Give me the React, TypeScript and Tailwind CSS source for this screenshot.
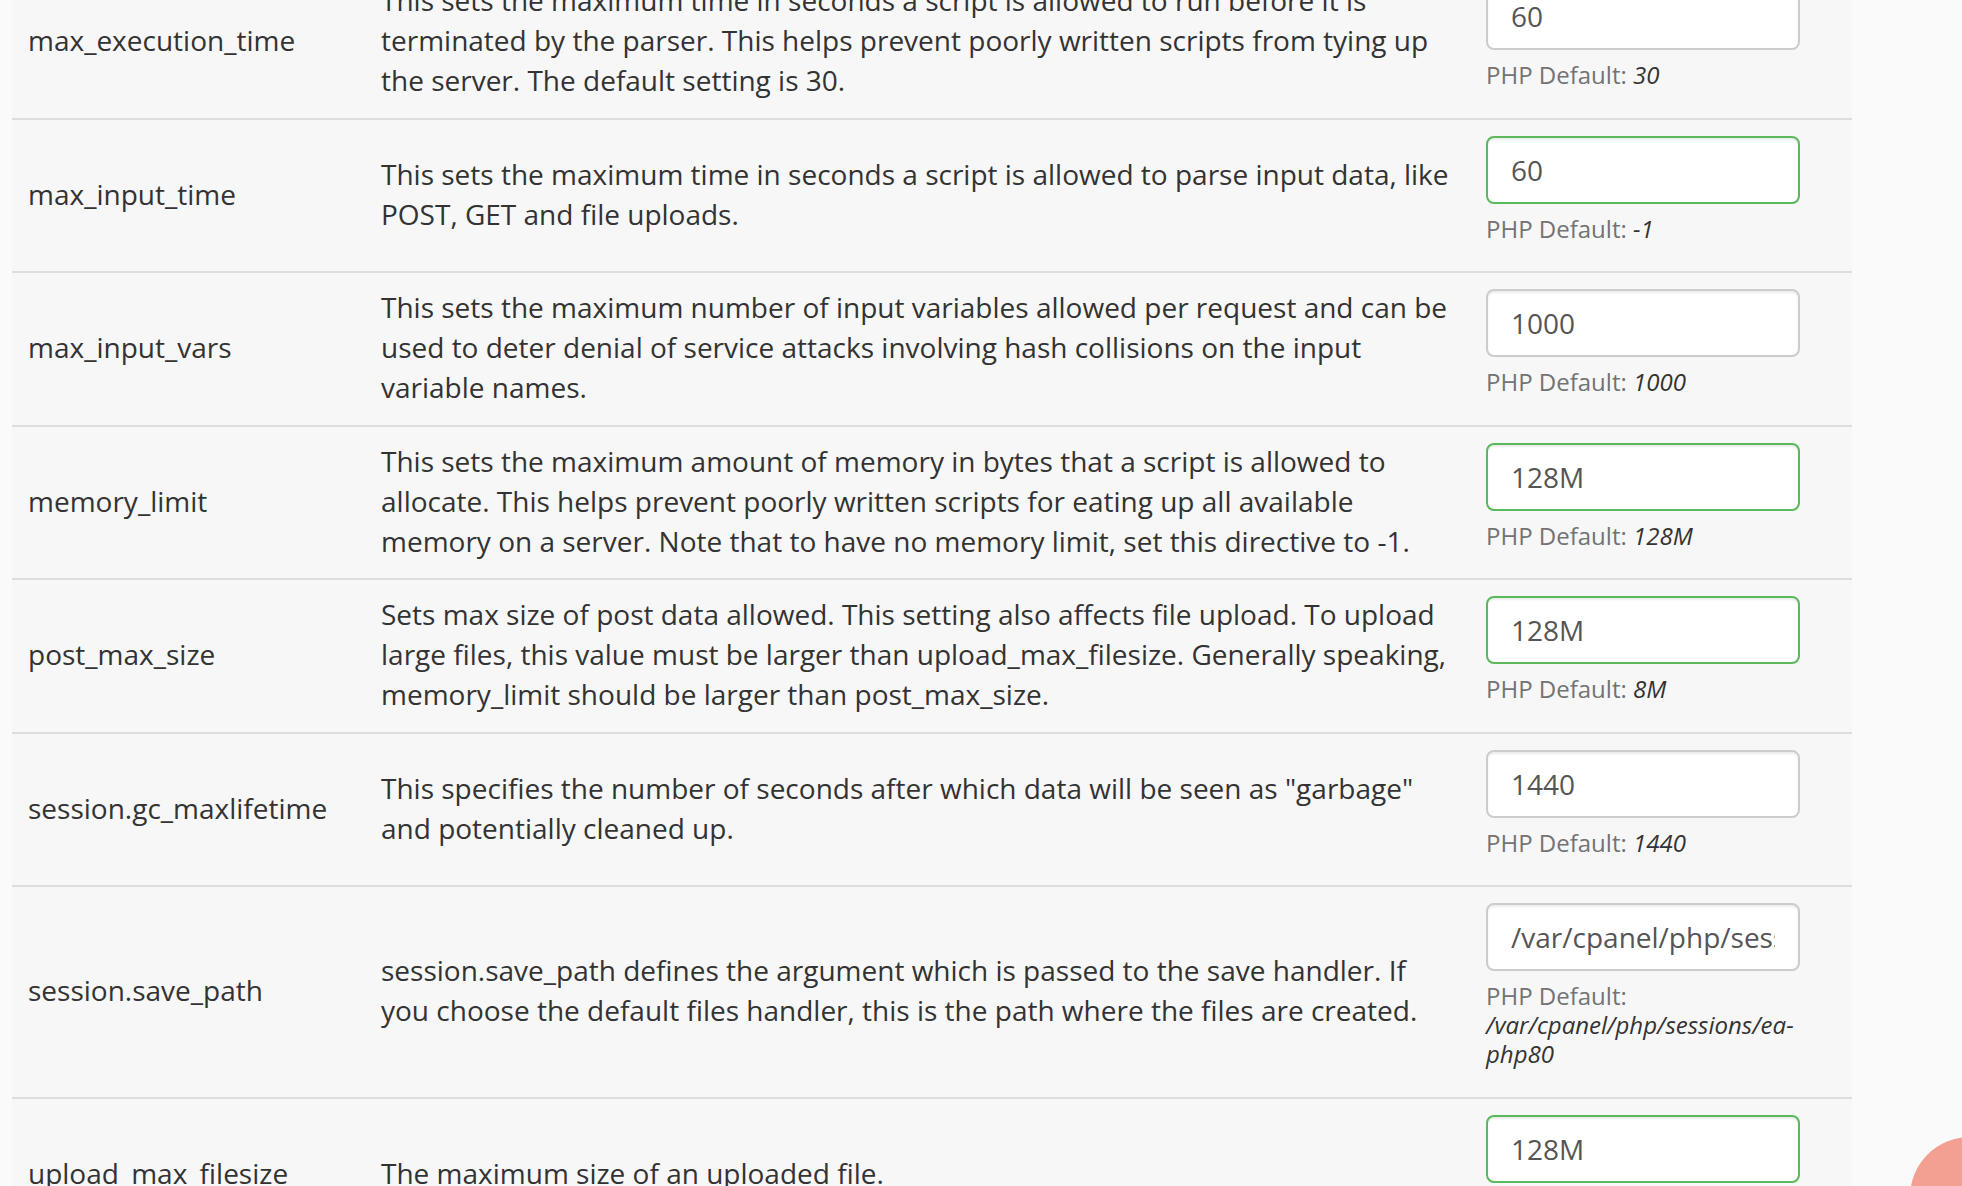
import React from 'react';

type Directive = {
  name: string;
  description: string;
  value: string;
  phpDefault: string;
  changed: boolean;
};

const directives: Directive[] = [
  {
    name: 'max_execution_time',
    description:
      'This sets the maximum time in seconds a script is allowed to run before it is terminated by the parser. This helps prevent poorly written scripts from tying up the server. The default setting is 30.',
    value: '60',
    phpDefault: '30',
    changed: false,
  },
  {
    name: 'max_input_time',
    description:
      'This sets the maximum time in seconds a script is allowed to parse input data, like POST, GET and file uploads.',
    value: '60',
    phpDefault: '-1',
    changed: true,
  },
  {
    name: 'max_input_vars',
    description:
      'This sets the maximum number of input variables allowed per request and can be used to deter denial of service attacks involving hash collisions on the input variable names.',
    value: '1000',
    phpDefault: '1000',
    changed: false,
  },
  {
    name: 'memory_limit',
    description:
      'This sets the maximum amount of memory in bytes that a script is allowed to allocate. This helps prevent poorly written scripts for eating up all available memory on a server. Note that to have no memory limit, set this directive to -1.',
    value: '128M',
    phpDefault: '128M',
    changed: true,
  },
  {
    name: 'post_max_size',
    description:
      'Sets max size of post data allowed. This setting also affects file upload. To upload large files, this value must be larger than upload_max_filesize. Generally speaking, memory_limit should be larger than post_max_size.',
    value: '128M',
    phpDefault: '8M',
    changed: true,
  },
  {
    name: 'session.gc_maxlifetime',
    description:
      'This specifies the number of seconds after which data will be seen as "garbage" and potentially cleaned up.',
    value: '1440',
    phpDefault: '1440',
    changed: false,
  },
  {
    name: 'session.save_path',
    description:
      'session.save_path defines the argument which is passed to the save handler. If you choose the default files handler, this is the path where the files are created.',
    value: '/var/cpanel/php/sessions/ea-php80',
    phpDefault: '/var/cpanel/php/sessions/ea-php80',
    changed: false,
  },
  {
    name: 'upload_max_filesize',
    description: 'The maximum size of an uploaded file.',
    value: '128M',
    phpDefault: '2M',
    changed: true,
  },
];

const DirectiveRow = ({ directive }: { directive: Directive }) => {
  return (
    <div className="grid grid-cols-[353px_1105px_382px] items-center border-t-2 border-[#dddddd]">
      <div className="px-4 pb-[3px] text-[28px] leading-[40px] text-[#333]">{directive.name}</div>
      <div className="px-4 pb-[3px] text-[28px] leading-[40px] text-[#333]">{directive.description}</div>
      <div className="pl-4 pt-4 pb-[28.5px]">
        <div className="w-[314px]">
          <input
            type="text"
            defaultValue={directive.value}
            className={`block w-full h-[68px] px-[23px] bg-white rounded-lg border-2 text-[28px] text-[#555] outline-none shadow-[inset_0_2px_2px_rgba(0,0,0,0.075)] ${
              directive.changed ? 'border-[#5cb85c]' : 'border-[#cccccc]'
            }`}
          />
          <p className="mt-[10px] text-[24px] leading-[29px] text-[#737373]">
            PHP Default: <em className="text-[#333]">{directive.phpDefault}</em>
          </p>
        </div>
      </div>
    </div>
  );
};

export default function App() {
  return (
    <div className="relative h-[1186px] overflow-hidden bg-[#fafafa] font-['Open_Sans',sans-serif]">
      <div className="ml-[12px] w-[1840px] -mt-[36px] bg-[#f7f7f7]">
        {directives.map((d) => (
          <DirectiveRow key={d.name} directive={d} />
        ))}
      </div>
      {/* chat bubble peeking in from the corner */}
      <div className="absolute -right-[68px] -bottom-[71px] w-[120px] h-[120px] rounded-full bg-[#f3a092]"></div>
    </div>
  );
}
